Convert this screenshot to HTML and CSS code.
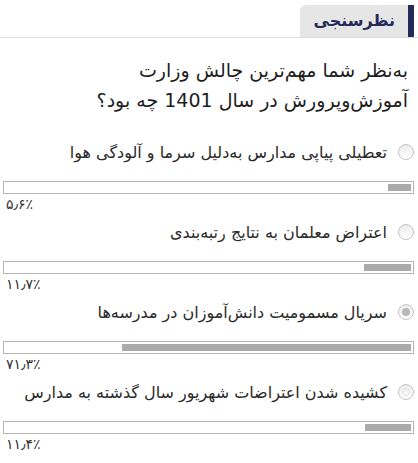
FILE: index.html
```html
<!DOCTYPE html>
<html lang="fa" dir="rtl">
<head>
    <meta charset="UTF-8">
    <meta name="viewport" content="width=device-width, initial-scale=1.0">
    <title>نظرسنجی</title>
    <link rel="stylesheet" href="styles.css">
</head>
<body>
    <div class="poll">
        <div class="poll-head">
            <span class="poll-tab">نظرسنجی</span>
        </div>
        <h2 class="poll-question">به‌نظر شما مهم‌ترین چالش وزارت<br>آموزش‌وپرورش در سال 1401 چه بود؟</h2>
        <ul class="poll-options">
            <li class="option">
                <label class="option-label"><span class="radio"></span>تعطیلی پیاپی مدارس به‌دلیل سرما و آلودگی هوا</label>
                <div class="bar"><div class="bar-fill" style="width:5.6%"></div></div>
                <div class="percent">۵٫۶٪</div>
            </li>
            <li class="option">
                <label class="option-label"><span class="radio"></span>اعتراض معلمان به نتایج رتبه‌بندی</label>
                <div class="bar"><div class="bar-fill" style="width:11.7%"></div></div>
                <div class="percent">۱۱٫۷٪</div>
            </li>
            <li class="option">
                <label class="option-label"><span class="radio checked"></span>سریال مسمومیت دانش‌آموزان در مدرسه‌ها</label>
                <div class="bar"><div class="bar-fill" style="width:71.3%"></div></div>
                <div class="percent">۷۱٫۳٪</div>
            </li>
            <li class="option">
                <label class="option-label"><span class="radio ring"></span>کشیده شدن اعتراضات شهریور سال گذشته به مدارس</label>
                <div class="bar"><div class="bar-fill" style="width:11.4%"></div></div>
                <div class="percent">۱۱٫۴٪</div>
            </li>
        </ul>
    </div>
</body>
</html>
```

FILE: styles.css
```css
body {
    margin: 0;
    font-family: 'DejaVu Sans', 'Noto Sans', sans-serif;
    color: #222;
    background: #fff;
}

.poll {
    padding: 0 4px 0 3px;
}

.poll-head {
    margin: 0 -4px 0 -3px;
    padding: 5px 4px 0 0;
    border-bottom: 1px solid #dcdcdc;
    display: flex;
}

.poll-tab {
    display: inline-block;
    height: 32px;
    line-height: 31px;
    padding: 0 13px;
    background: #e6e6e6;
    border-right: 6px solid #262a5a;
    border-radius: 6px 0 0 0;
    color: #262a5a;
    font-size: 16px;
    font-weight: bold;
}

.poll-question {
    margin: 17px 6px 25px 0;
    font-size: 19px;
    font-weight: normal;
    line-height: 30px;
    color: #1e1e1e;
}

.poll-options {
    list-style: none;
    margin: 0;
    padding: 0;
}

.option {
    margin-bottom: 6px;
}

.option-label {
    display: flex;
    align-items: center;
    gap: 11px;
    height: 24px;
    font-size: 16px;
    white-space: nowrap;
    color: #2a2a2a;
    margin-bottom: 17px;
}

.radio {
    flex: none;
    width: 16px;
    height: 16px;
    border: 1px solid #c4c4c4;
    border-radius: 50%;
    background: linear-gradient(#ececec, #fff);
    box-sizing: border-box;
    position: relative;
}

.radio.checked::after,
.radio.ring::after {
    content: "";
    position: absolute;
    top: 3px;
    left: 3px;
    width: 8px;
    height: 8px;
    border-radius: 50%;
}

.radio.checked::after {
    background: #b8b8b8;
}

.radio.ring::after {
    border: 1px solid #e2e2e2;
    box-sizing: border-box;
}

.bar {
    height: 13px;
    border: 1px solid #b5b5b5;
    padding: 2px;
    box-sizing: border-box;
    display: flex;
}

.bar-fill {
    height: 100%;
    background: #ababab;
}

.percent {
    direction: ltr;
    text-align: left;
    font-size: 14px;
    line-height: 20px;
    padding-left: 3px;
    color: #333;
}
```
